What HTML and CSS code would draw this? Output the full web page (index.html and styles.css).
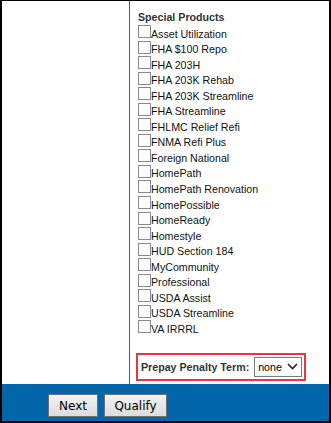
FILE: index.html
```html
<!DOCTYPE html>
<html lang="en">
<head>
    <meta charset="UTF-8">
    <meta name="viewport" content="width=device-width, initial-scale=1.0">
    <title>Special Products</title>
    <link rel="stylesheet" href="styles.css">
</head>
<body>
    <div class="frame">
        <div class="main">
            <div class="side"></div>
            <div class="content">
                <div class="heading">Special Products</div>
                <div class="product-list">
                    <label class="row"><input type="checkbox"><span>Asset Utilization</span></label>
                    <label class="row"><input type="checkbox"><span>FHA $100 Repo</span></label>
                    <label class="row"><input type="checkbox"><span>FHA 203H</span></label>
                    <label class="row"><input type="checkbox"><span>FHA 203K Rehab</span></label>
                    <label class="row"><input type="checkbox"><span>FHA 203K Streamline</span></label>
                    <label class="row"><input type="checkbox"><span>FHA Streamline</span></label>
                    <label class="row"><input type="checkbox"><span>FHLMC Relief Refi</span></label>
                    <label class="row"><input type="checkbox"><span>FNMA Refi Plus</span></label>
                    <label class="row"><input type="checkbox"><span>Foreign National</span></label>
                    <label class="row"><input type="checkbox"><span>HomePath</span></label>
                    <label class="row"><input type="checkbox"><span>HomePath Renovation</span></label>
                    <label class="row"><input type="checkbox"><span>HomePossible</span></label>
                    <label class="row"><input type="checkbox"><span>HomeReady</span></label>
                    <label class="row"><input type="checkbox"><span>Homestyle</span></label>
                    <label class="row"><input type="checkbox"><span>HUD Section 184</span></label>
                    <label class="row"><input type="checkbox"><span>MyCommunity</span></label>
                    <label class="row"><input type="checkbox"><span>Professional</span></label>
                    <label class="row"><input type="checkbox"><span>USDA Assist</span></label>
                    <label class="row"><input type="checkbox"><span>USDA Streamline</span></label>
                    <label class="row"><input type="checkbox"><span>VA IRRRL</span></label>
                </div>
                <div class="prepay">
                    <label for="prepay-term">Prepay Penalty Term:</label>
                    <span class="select-box">
                        <select id="prepay-term">
                            <option>none</option>
                        </select>
                        <svg class="chevron" width="11" height="7" viewBox="0 0 11 7"><path d="M1 1 L5.5 5.5 L10 1" fill="none" stroke="#222" stroke-width="1.6"/></svg>
                    </span>
                </div>
            </div>
        </div>
        <div class="footer">
            <button class="btn btn-next">Next</button>
            <button class="btn btn-qualify">Qualify</button>
        </div>
    </div>
</body>
</html>
```
FILE: styles.css
```css
html, body {
    margin: 0;
    padding: 0;
    background: #fff;
}
.frame {
    width: 331px;
    height: 423px;
    box-sizing: border-box;
    border-style: solid;
    border-color: #000;
    border-width: 1px 2px 2px 2px;
    display: flex;
    flex-direction: column;
    font-family: "Liberation Sans", Arial, sans-serif;
    font-size: 10.67px;
}
.main {
    flex: 1;
    display: flex;
}
.side {
    width: 127px;
    border-right: 1px solid #2f6496;
}
.content {
    flex: 1;
    padding: 10px 0 0 8px;
}
.heading {
    font-weight: bold;
    color: #333;
    line-height: 12px;
    margin-bottom: 2px;
}
.row {
    display: flex;
    align-items: flex-start;
    height: 15.55px;
    color: #111;
}
.row input {
    appearance: none;
    -webkit-appearance: none;
    width: 13px;
    height: 13px;
    margin: 0;
    box-sizing: border-box;
    border: 1px solid #8a8a8a;
    background: #fff;
    border-radius: 0;
}
.row span {
    line-height: 12px;
    margin-top: 2.5px;
}
.prepay {
    display: inline-flex;
    align-items: center;
    margin: 17px 0 0 -2px;
    border: 2px solid #e8383e;
    padding: 2px 2px 2px 3px;
    gap: 5px;
    font-weight: bold;
    color: #333;
}
.select-box {
    display: flex;
    align-items: center;
    width: 48px;
    height: 20px;
    box-sizing: border-box;
    border: 1px solid #7a7a7a;
    background: #fff;
}
.select-box select {
    appearance: none;
    -webkit-appearance: none;
    border: none;
    background: transparent;
    font-family: "Liberation Sans", Arial, sans-serif;
    font-size: 10.67px;
    color: #000;
    width: 30px;
    padding: 0 0 0 3px;
    margin: 0;
    outline: none;
}
.chevron {
    margin-left: 2px;
}
.footer {
    height: 37px;
    box-sizing: border-box;
    background: #0366ab;
    padding: 10px 0 0 46px;
    display: flex;
    align-items: flex-start;
    gap: 6px;
}
.btn {
    height: 23px;
    border: 1px solid #707070;
    border-radius: 0;
    background: linear-gradient(#f3f3f3, #dcdcdc);
    font-family: "DejaVu Sans", Tahoma, sans-serif;
    font-size: 12px;
    color: #000;
    padding: 0;
    margin: 0;
    cursor: pointer;
}
.btn-next {
    width: 50px;
}
.btn-qualify {
    width: 63px;
}
```
